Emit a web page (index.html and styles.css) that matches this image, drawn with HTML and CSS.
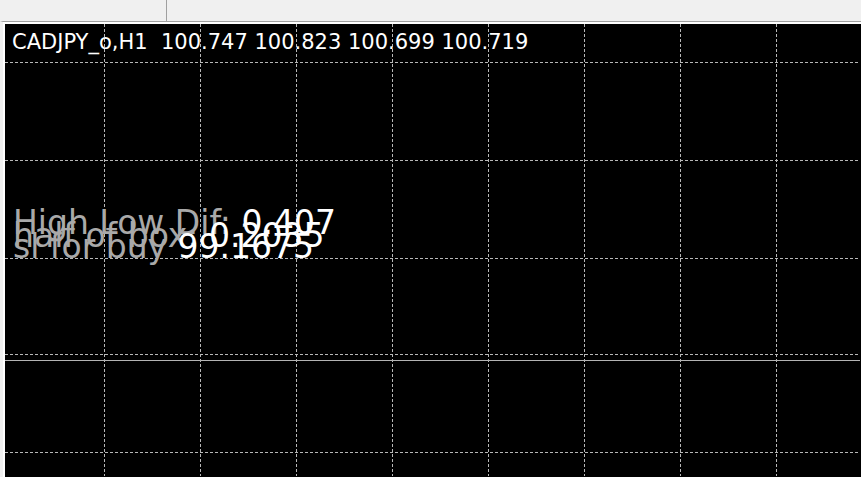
FILE: index.html
```html
<!DOCTYPE html>
<html lang="en">
<head>
    <meta charset="UTF-8">
    <title>CADJPY_o,H1</title>
    <link rel="stylesheet" href="styles.css">
</head>
<body>
    <div class="tabs">
        <div class="tab"></div>
    </div>

    <section class="frame">
        <div class="chart">
            <svg class="grid" width="855" height="452">
                <g stroke="#b8b8b8" stroke-width="1" stroke-dasharray="3 2">
                    <line x1="99.5" y1="0" x2="99.5" y2="452"/>
                    <line x1="195.5" y1="0" x2="195.5" y2="452"/>
                    <line x1="291.5" y1="0" x2="291.5" y2="452"/>
                    <line x1="387.5" y1="0" x2="387.5" y2="452"/>
                    <line x1="483.5" y1="0" x2="483.5" y2="452"/>
                    <line x1="579.5" y1="0" x2="579.5" y2="452"/>
                    <line x1="675.5" y1="0" x2="675.5" y2="452"/>
                    <line x1="771.5" y1="0" x2="771.5" y2="452"/>
                    <line x1="0" y1="38.5" x2="855" y2="38.5"/>
                    <line x1="0" y1="136.5" x2="855" y2="136.5"/>
                    <line x1="0" y1="234.5" x2="855" y2="234.5"/>
                    <line x1="0" y1="330.5" x2="855" y2="330.5"/>
                    <line x1="0" y1="428.5" x2="855" y2="428.5"/>
                </g>
                <line x1="0" y1="336.5" x2="855" y2="336.5" stroke="#b4b4b4" stroke-width="1"/>
            </svg>

            <div class="title">CADJPY_o,H1&nbsp; 100.747 100.823 100.699 100.719</div>

            <div class="label label-dif"><span class="name">High Low Dif: </span><span class="value">0.407</span></div>
            <div class="label label-half"><span class="name">half of box: </span><span class="value">0.2035</span></div>
            <div class="label label-sl"><span class="name">sl for buy </span><span class="value">99.1675</span></div>
        </div>
    </section>
</body>
</html>
```

FILE: styles.css
```css
body {
    margin: 0;
    background-color: #f0f0f0;
    font-family: "DejaVu Sans", Verdana, sans-serif;
    overflow: hidden;
}

.tabs {
    height: 21px;
    display: flex;
}

.tab {
    width: 166px;
    border-right: 1px solid #a0a0a0;
}

.frame {
    border-top: 1px solid #a0a0a0;
    border-left: 3px solid #f0f0f0;
    height: 455px;
    display: flex;
}

.chart {
    position: relative;
    flex: 1;
    background-color: #000000;
    border-top: 2px solid #ffffff;
    border-left: 2px solid #ffffff;
    overflow: hidden;
}

.grid {
    position: absolute;
    left: 0;
    top: 0;
    display: block;
}

.title {
    position: absolute;
    left: 7px;
    top: 6px;
    color: #ffffff;
    font-size: 21px;
    white-space: pre;
}

.label {
    position: absolute;
    left: 8px;
    font-size: 33px;
    white-space: pre;
    line-height: 1;
}

.name {
    color: #a9a9a9;
}

.value {
    color: #ffffff;
}

.label-dif {
    top: 182px;
}

.label-half {
    top: 195px;
}

.label-sl {
    top: 206px;
}
```
